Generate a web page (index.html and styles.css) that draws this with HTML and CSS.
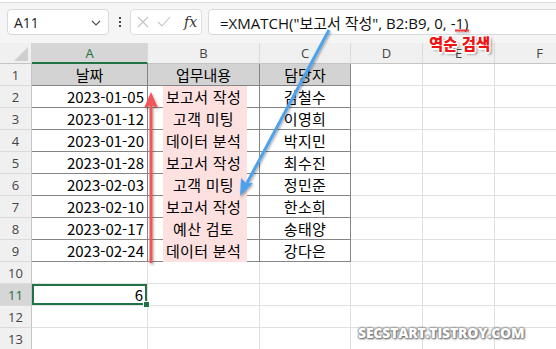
FILE: index.html
```html
<!DOCTYPE html>
<html lang="ko">
<head>
<meta charset="utf-8">
<title>XMATCH</title>
<link rel="stylesheet" href="styles.css">
</head>
<body>
<div class="app">
  <div class="topstrip"></div>
  <div class="fbar">
    <div class="namebox"><span>A11</span>
      <svg class="chev" width="10" height="6" viewBox="0 0 10 6"><path d="M1 1 L5 5 L9 1" fill="none" stroke="#555" stroke-width="1.2"/></svg>
    </div>
    <div class="dots"><i></i><i></i><i></i></div>
    <div class="btns">
      <svg width="12" height="12" viewBox="0 0 12 12"><path d="M1 1 L11 11 M11 1 L1 11" stroke="#c4c4c4" stroke-width="1.1" fill="none"/></svg>
      <svg width="14" height="12" viewBox="0 0 14 12"><path d="M1 6 L5 10 L13 1" stroke="#c4c4c4" stroke-width="1.1" fill="none"/></svg>
      <span class="fx">fx</span>
    </div>
    <div class="formula">=XMATCH("보고서 작성", B2:B9, 0, -1)</div>
  </div>
  <div class="sheet">
    <div class="corner"><svg width="14" height="14" viewBox="0 0 14 14"><path d="M14 0 L14 14 L0 14 Z" fill="#cfcfcf"/></svg></div>
    <div class="ch sel">A</div><div class="ch">B</div><div class="ch">C</div><div class="ch">D</div><div class="ch">E</div><div class="ch">F</div>

    <div class="rh">1</div><div class="c t hd">날짜</div><div class="c t hd">업무내용</div><div class="c t hd">담당자</div><div class="c"></div><div class="c"></div><div class="c"></div>
    <div class="rh">2</div><div class="c t r">2023-01-05</div><div class="c t m"><span>보고서 작성</span></div><div class="c t m">김철수</div><div class="c"></div><div class="c"></div><div class="c"></div>
    <div class="rh">3</div><div class="c t r">2023-01-12</div><div class="c t m"><span>고객 미팅</span></div><div class="c t m">이영희</div><div class="c"></div><div class="c"></div><div class="c"></div>
    <div class="rh">4</div><div class="c t r">2023-01-20</div><div class="c t m"><span>데이터 분석</span></div><div class="c t m">박지민</div><div class="c"></div><div class="c"></div><div class="c"></div>
    <div class="rh">5</div><div class="c t r">2023-01-28</div><div class="c t m"><span>보고서 작성</span></div><div class="c t m">최수진</div><div class="c"></div><div class="c"></div><div class="c"></div>
    <div class="rh">6</div><div class="c t r">2023-02-03</div><div class="c t m"><span>고객 미팅</span></div><div class="c t m">정민준</div><div class="c"></div><div class="c"></div><div class="c"></div>
    <div class="rh">7</div><div class="c t r">2023-02-10</div><div class="c t m"><span>보고서 작성</span></div><div class="c t m">한소희</div><div class="c"></div><div class="c"></div><div class="c"></div>
    <div class="rh">8</div><div class="c t r">2023-02-17</div><div class="c t m"><span>예산 검토</span></div><div class="c t m">송태양</div><div class="c"></div><div class="c"></div><div class="c"></div>
    <div class="rh">9</div><div class="c t r">2023-02-24</div><div class="c t m"><span>데이터 분석</span></div><div class="c t m">강다은</div><div class="c"></div><div class="c"></div><div class="c"></div>
    <div class="rh">10</div><div class="c"></div><div class="c"></div><div class="c"></div><div class="c"></div><div class="c"></div><div class="c"></div>
    <div class="rh selr">11</div><div class="c r active">6</div><div class="c"></div><div class="c"></div><div class="c"></div><div class="c"></div><div class="c"></div>
    <div class="rh">12</div><div class="c"></div><div class="c"></div><div class="c"></div><div class="c"></div><div class="c"></div><div class="c"></div>
    <div class="rh">13</div><div class="c"></div><div class="c"></div><div class="c"></div><div class="c"></div><div class="c"></div><div class="c"></div>
    <div class="pink"></div>
  </div>

  <svg class="arrows" width="556" height="349" viewBox="0 0 556 349">
    <defs>
      <filter id="sh" x="-20%" y="-20%" width="140%" height="140%">
        <feDropShadow dx="1" dy="1.5" stdDeviation="1.2" flood-color="#000" flood-opacity="0.35"/>
      </filter>
    </defs>
    <g filter="url(#sh)">
      <line x1="151" y1="263" x2="151" y2="104" stroke="#f25757" stroke-width="3"/>
      <path d="M151 92 L158 108 L151 105 L144 108 Z" fill="#f25757"/>
      <line x1="329" y1="30" x2="247" y2="183" stroke="#4ea2ee" stroke-width="3"/>
      <path d="M240 196 L241 178 L246 183 L253 183 Z" fill="#4ea2ee"/>
      <line x1="455" y1="30.5" x2="469" y2="30.5" stroke="#ee3a3a" stroke-width="2"/>
    </g>
  </svg>
  <div class="label">역순 검색</div>
  <div class="wm">SECSTART.TISTROY.COM</div>
</div>
</body>
</html>
```

FILE: styles.css
```css
* { box-sizing: border-box; }
html, body { margin: 0; padding: 0; }
body {
  width: 556px;
  height: 349px;
  overflow: hidden;
  background: #f5f5f5;
  font-family: "Noto Sans CJK KR", "Noto Sans", sans-serif;
}
.app { position: relative; width: 556px; height: 349px; overflow: hidden; }
.topstrip { height: 3px; background: #fff; border-bottom: 1px solid #dcdcdc; }

.fbar {
  display: flex;
  align-items: center;
  height: 40px;
  padding: 6px 0 8px 7px;
}
.namebox {
  width: 102px;
  height: 26px;
  background: #fff;
  border: 1px solid #d9d9d9;
  border-radius: 4px;
  display: flex;
  align-items: center;
  justify-content: space-between;
  padding: 0 7px 0 6px;
  font-family: "Open Sans", "Noto Sans", sans-serif;
  font-size: 14px;
  color: #222;
}
.chev { margin-top: 1px; }
.dots {
  width: 21px;
  display: flex;
  flex-direction: column;
  align-items: center;
  gap: 2px;
}
.dots i { display: block; width: 2px; height: 2px; background: #444; }
.btns {
  width: 72px;
  height: 26px;
  background: #fff;
  border: 1px solid #dedede;
  border-radius: 4px;
  display: flex;
  align-items: center;
  gap: 8px;
  padding-left: 6px;
}
.fx {
  font-family: "DejaVu Serif", "Liberation Serif", serif;
  font-style: italic;
  font-size: 14px;
  color: #333;
  margin-left: 5px;
}
.formula {
  flex: 1;
  margin-left: 6px;
  margin-right: -8px;
  height: 26px;
  background: #fff;
  border: 1px solid #d9d9d9;
  border-radius: 4px;
  padding-left: 11px;
  display: flex;
  align-items: center;
  font-family: "Open Sans", "Noto Sans CJK KR", sans-serif;
  font-size: 15px;
  color: #111;
  white-space: nowrap;
}

.sheet {
  position: relative;
  display: grid;
  grid-template-columns: 32px 116px 112px 91px 72px 72px 90px;
  grid-template-rows: 21px repeat(13, 22px);
  background: #fff;
}
.corner {
  background: #f0f0f0;
  border-right: 1px solid #d6d6d6;
  border-bottom: 1px solid #c4c4c4;
  display: flex;
  align-items: flex-end;
  justify-content: flex-end;
  padding: 0 3px 2px 0;
}
.ch {
  background: #f0f0f0;
  border-right: 1px solid #dadada;
  border-bottom: 1px solid #c4c4c4;
  display: flex;
  align-items: center;
  justify-content: center;
  font-family: "Open Sans", "Noto Sans", sans-serif;
  font-size: 13px;
  color: #444;
}
.ch.sel {
  background: #d6d6d6;
  color: #1e6b41;
  border-bottom: 2px solid #217346;
}
.rh {
  background: #f0f0f0;
  border-right: 1px solid #c4c4c4;
  border-bottom: 1px solid #dadada;
  display: flex;
  align-items: center;
  justify-content: center;
  font-family: "Open Sans", "Noto Sans", sans-serif;
  font-size: 13px;
  color: #444;
}
.rh.selr { background: #d6d6d6; color: #1e6b41; }
.c {
  border-right: 1px solid #e1e1e1;
  border-bottom: 1px solid #e1e1e1;
  display: flex;
  align-items: center;
  font-size: 15px;
  color: #000;
  padding: 0 3px;
  white-space: nowrap;
}
.c.t { border-right-color: #858585; border-bottom-color: #858585; }
.c.hd { background: #d3d3d3; justify-content: center; }
.c.r { justify-content: flex-end; }
.c.m { justify-content: center; letter-spacing: 0.3px; }
.c.m span { position: relative; z-index: 1; }
.c.active {
  position: relative;
  box-shadow: inset 0 0 0 2px #217346;
  padding-right: 4px;
}
.c.active::after {
  content: "";
  position: absolute;
  right: -3px;
  bottom: -3px;
  width: 5px;
  height: 5px;
  background: #217346;
  border: 1px solid #fff;
}
.pink {
  position: absolute;
  left: 163px;
  top: 43px;
  width: 84px;
  height: 176px;
  background: #fde1e1;
}
.arrows { position: absolute; left: 0; top: 0; pointer-events: none; }
.label {
  position: absolute;
  left: 429px;
  top: 33px;
  font-family: "Noto Sans CJK KR", sans-serif;
  font-weight: 900;
  font-size: 15.5px;
  line-height: 20px;
  color: #f01414;
  text-shadow:
    -1.5px 0 #fff, 1.5px 0 #fff, 0 -1.5px #fff, 0 1.5px #fff,
    -1px -1px #fff, 1px 1px #fff, -1px 1px #fff, 1px -1px #fff,
    2px 2px 3px rgba(0,0,0,0.6);
}
.wm {
  position: absolute;
  left: 358px;
  top: 323px;
  font-family: "Open Sans", "Noto Sans", sans-serif;
  font-weight: 800;
  font-size: 14px;
  color: #fff;
  letter-spacing: -0.2px;
  text-shadow:
    0 0 1px #777, 0 0 2px #777, 1px 1px 2px #666, 0 0 3px #888;
}
```
